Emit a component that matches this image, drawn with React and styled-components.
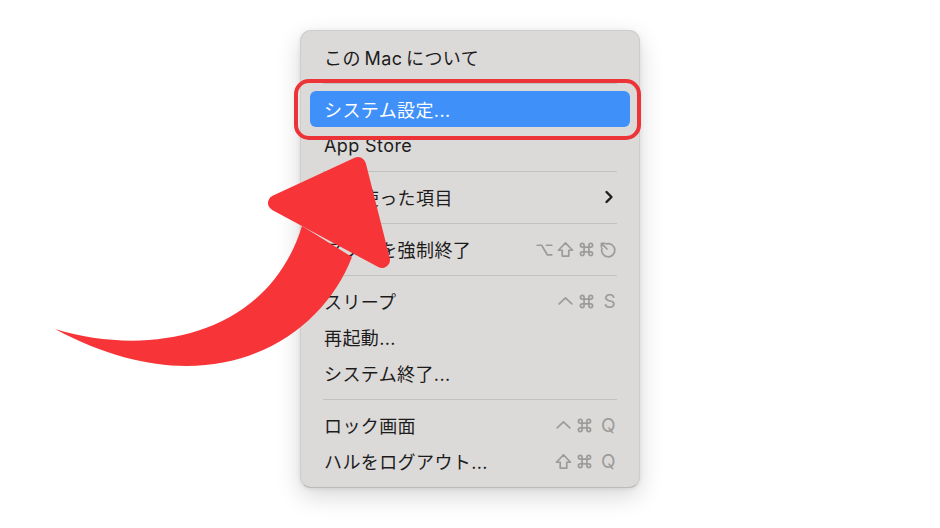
import React from 'react';
import styled, { createGlobalStyle } from 'styled-components';

const Global = createGlobalStyle`
  html, body {
    margin: 0;
    padding: 0;
    background: #ffffff;
  }
  body {
    font-family: Inter, "Noto Sans CJK JP", sans-serif;
  }
`;

const Stage = styled.div`
  position: relative;
  width: 940px;
  height: 528px;
  display: flex;
  justify-content: center;
  align-items: flex-start;
  padding-top: 30px;
  box-sizing: border-box;
  overflow: hidden;
`;

const Menu = styled.div`
  position: relative;
  width: 340px;
  box-sizing: border-box;
  padding: 8px 9px;
  background: #dcdad8;
  border: 1px solid #cfcdcb;
  border-bottom-color: #bdbbb9;
  border-radius: 11px;
  box-shadow: 0 8px 24px rgba(0, 0, 0, 0.16), 0 1px 4px rgba(0, 0, 0, 0.08);
  display: flex;
  flex-direction: column;
`;

const Row = styled.div`
  height: 36px;
  display: flex;
  align-items: center;
  justify-content: space-between;
  padding: 0 14px 0 14px;
  border-radius: 6px;
  font-size: 18px;
  font-weight: 400;
  color: ${(p) => (p.$active ? '#ffffff' : '#1c1c1c')};
  background: ${(p) => (p.$active ? '#3f90f8' : 'transparent')};
  letter-spacing: 0.4px;
`;

const Label = styled.span`
  white-space: nowrap;
`;

const Separator = styled.div`
  height: 16px;
  display: flex;
  align-items: center;
  padding: 0 13px;
  &::after {
    content: '';
    flex: 1;
    height: 1px;
    background: #c3c1bf;
  }
`;

const Keys = styled.span`
  display: flex;
  align-items: center;
  gap: 4px;
  color: #9c9b9a;
  font-size: 19px;
  font-weight: 400;
  svg {
    display: block;
  }
`;

const Letter = styled.span`
  margin-left: 4px;
  font-family: Inter, sans-serif;
`;

const Ring = styled.div`
  position: absolute;
  left: -7px;
  top: 48px;
  width: 339px;
  height: 53px;
  border: 4px solid #ec3338;
  border-radius: 15px;
  pointer-events: none;
`;

const Arrow = styled.svg`
  position: absolute;
  left: 0;
  top: 0;
  pointer-events: none;
`;

const Glyph = ({ children }) => (
  <svg width="17" height="17" viewBox="0 0 14 14" fill="none" stroke="currentColor"
    strokeWidth="1.4" strokeLinecap="round" strokeLinejoin="round">
    {children}
  </svg>
);

const Opt = () => <Glyph><path d="M1 3.5 H4.6 L9.4 11.5 H13 M8.6 3.5 H13" /></Glyph>;
const Shift = () => <Glyph><path d="M7 1.6 L12.8 7.6 H9.7 V12.4 H4.3 V7.6 H1.2 Z" /></Glyph>;
const Cmd = () => (
  <Glyph>
    <path d="M5 5 V3.5 A1.5 1.5 0 1 0 3.5 5 H10.5 A1.5 1.5 0 1 0 9 3.5 V10.5 A1.5 1.5 0 1 0 10.5 9 H3.5 A1.5 1.5 0 1 0 5 10.5 Z" />
  </Glyph>
);
const Esc = () => (
  <Glyph>
    <path d="M2.4 6.2 A5.4 5.4 0 1 0 6.2 2.4" />
    <path d="M2 2 L6.6 6.6 M2 2 H5 M2 2 V5" />
  </Glyph>
);
const Ctrl = () => <Glyph><path d="M1.8 9 L7 4 L12.2 9" /></Glyph>;

const Chevron = () => (
  <svg width="14" height="16" viewBox="0 0 14 16" fill="none" stroke="#1e1e1e"
    strokeWidth="2.4" strokeLinecap="round" strokeLinejoin="round">
    <path d="M4.5 3 L9.5 8 L4.5 13" />
  </svg>
);

export default function App() {
  return (
    <>
      <Global />
      <Stage>
        <Menu>
          <Row><Label>この{'\u2009'}Mac{'\u2009'}について</Label></Row>
          <Separator />
          <Row $active><Label>システム設定...</Label></Row>
          <Row><Label>App Store</Label></Row>
          <Separator />
          <Row><Label>最近使った項目</Label><Chevron /></Row>
          <Separator />
          <Row>
            <Label>アプリを強制終了</Label>
            <Keys><Opt /><Shift /><Cmd /><Esc /></Keys>
          </Row>
          <Separator />
          <Row>
            <Label>スリープ</Label>
            <Keys><Ctrl /><Cmd /><Letter>S</Letter></Keys>
          </Row>
          <Row><Label>再起動...</Label></Row>
          <Row><Label>システム終了...</Label></Row>
          <Separator />
          <Row>
            <Label>ロック画面</Label>
            <Keys><Ctrl /><Cmd /><Letter>Q</Letter></Keys>
          </Row>
          <Row>
            <Label>ハルをログアウト...</Label>
            <Keys><Shift /><Cmd /><Letter>Q</Letter></Keys>
          </Row>
          <Ring />
        </Menu>
        <Arrow width="940" height="528" viewBox="0 0 940 528">
          <path
            d="M55 329 C150 358 268 336 302 226 L352 257 C318 345 205 410 55 329 Z"
            fill="#f73437"
          />
          <polygon
            points="358,165 276,203 382,260"
            fill="#f73437"
            stroke="#f73437"
            strokeWidth="16"
            strokeLinejoin="round"
          />
        </Arrow>
      </Stage>
    </>
  );
}
